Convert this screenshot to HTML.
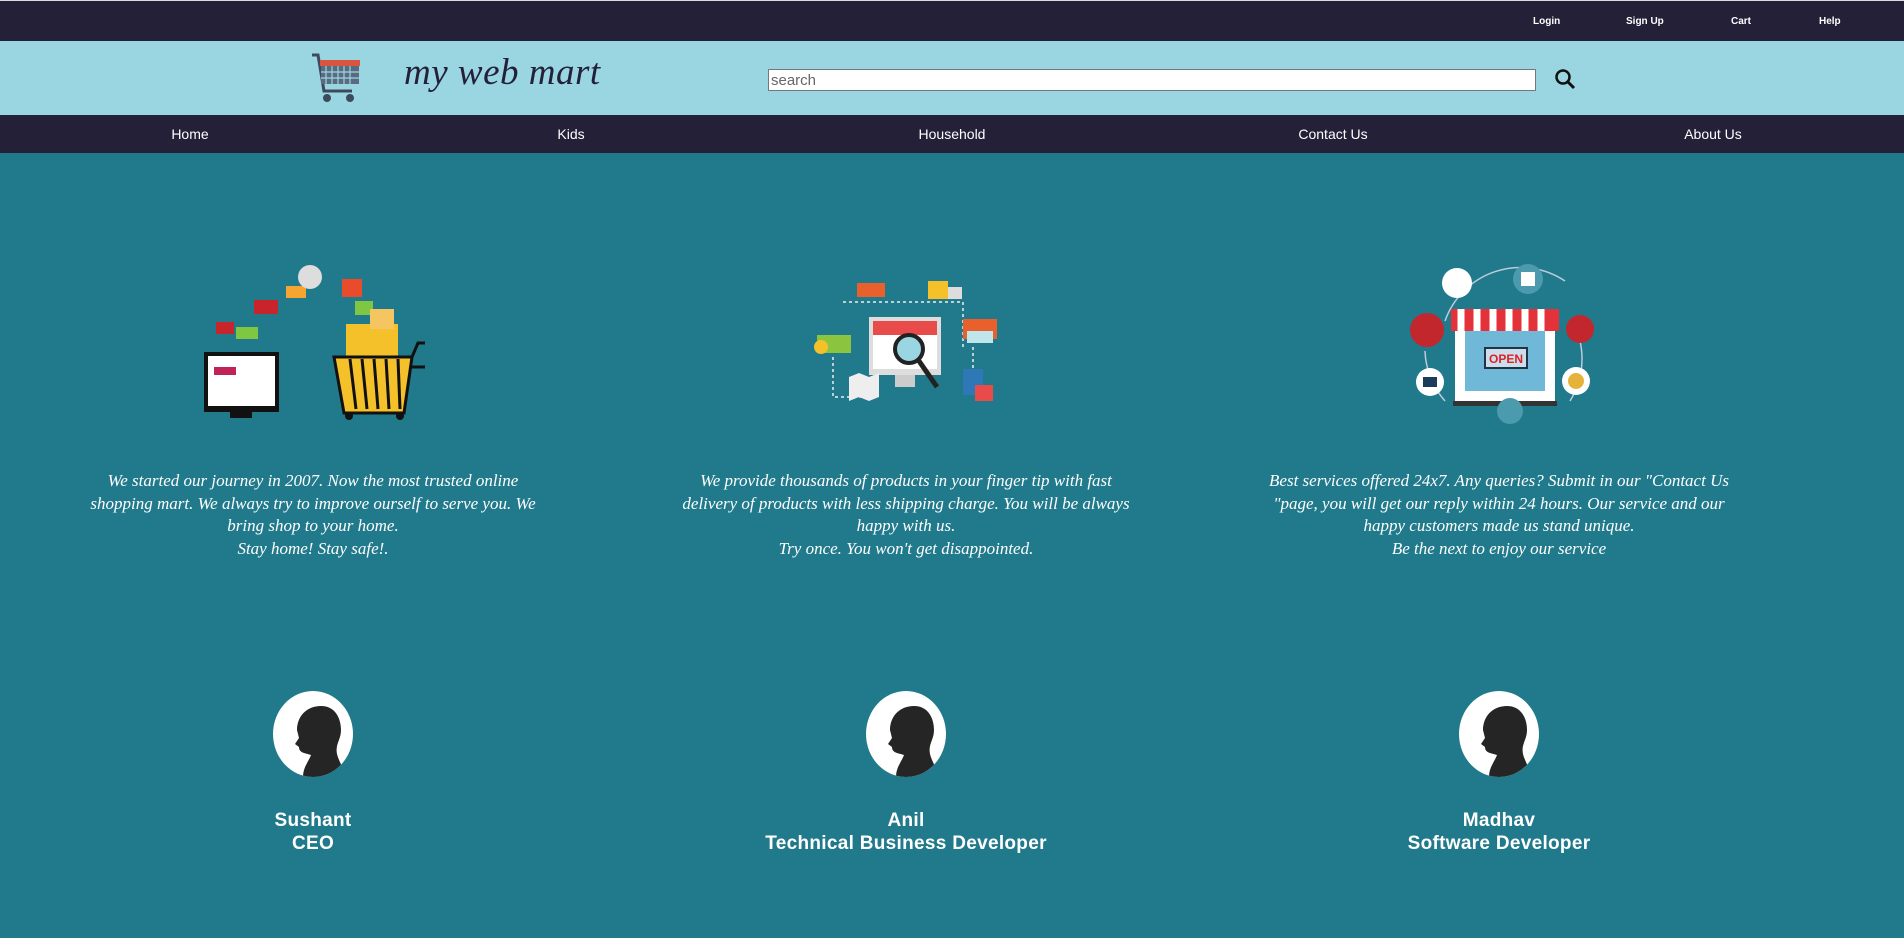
<!DOCTYPE html>
<html><head><meta charset="utf-8"><style>
*{margin:0;padding:0;box-sizing:border-box}
body{width:1904px;height:938px;background:#217a8b;font-family:"Liberation Sans",sans-serif;overflow:hidden;position:relative}
.top{position:absolute;left:0;top:0;width:1904px;height:41px;background:#232038;border-top:1px solid #ddd}
.top span{position:absolute;top:15px;color:#fff;font-size:10px;font-weight:bold}
.hdr{position:absolute;left:0;top:41px;width:1904px;height:74px;background:#9ad5e2}
.logo{position:absolute;left:404px;top:10px;font-family:"Liberation Serif",serif;font-style:italic;font-size:37px;color:#232038;letter-spacing:0.5px}
.search{position:absolute;left:768px;top:28px;width:768px;height:22px;background:#fff;border:1px solid #777;font-size:15px;color:#666;padding:2px 2px}
.nav{position:absolute;left:0;top:115px;width:1904px;height:38px;background:#232038}
.nav span{position:absolute;top:11px;color:#fff;font-size:14px;transform:translateX(-50%)}
.txt{position:absolute;top:470px;width:470px;transform:translateX(-50%);text-align:center;color:#fff;font-family:"Liberation Serif",serif;font-style:italic;font-size:17px;line-height:22.5px}
.av{position:absolute;top:691px;width:80px;height:86px;border-radius:50%;background:#fff;overflow:hidden;transform:translateX(-50%)}
.nm{position:absolute;top:809px;transform:translateX(-50%);text-align:center;color:#fff;font-weight:bold;font-size:19px;line-height:23px;white-space:nowrap;letter-spacing:0.3px}
</style></head><body>
<div class="top"><span style="left:1533px">Login</span><span style="left:1626px">Sign Up</span><span style="left:1731px">Cart</span><span style="left:1819px">Help</span></div>
<div class="hdr">
<svg style="position:absolute;left:308px;top:11px" width="56" height="54" viewBox="0 0 56 54"><path d="M4 3h6l6 36h28" stroke="#3d4a5c" stroke-width="3" fill="none"/><rect x="12" y="8" width="40" height="6" fill="#d8563f"/><rect x="13" y="14" width="38" height="18" fill="#5a6b80"/><path d="M18 14v18M24 14v18M30 14v18M36 14v18M42 14v18M13 20h38M13 26h38" stroke="#9ad5e2" stroke-width="1.2"/><circle cx="19" cy="46" r="4" fill="#3d4a5c"/><circle cx="42" cy="46" r="4" fill="#3d4a5c"/></svg>
<div class="logo">my web mart</div>
<div class="search">search</div>
<svg style="position:absolute;left:1554px;top:27px" width="22" height="22" viewBox="0 0 22 22"><circle cx="9" cy="9" r="6.5" stroke="#111" stroke-width="2.5" fill="none"/><path d="M13.5 13.5l6.5 6.5" stroke="#111" stroke-width="3"/></svg>
</div>
<div class="nav"><span style="left:190px">Home</span><span style="left:571px">Kids</span><span style="left:952px">Household</span><span style="left:1333px">Contact Us</span><span style="left:1713px">About Us</span></div>

<svg style="position:absolute;left:200px;top:259px" width="225" height="165" viewBox="0 0 225 165">
<rect x="4" y="93" width="75" height="60" fill="#111"/><rect x="8" y="97" width="67" height="50" fill="#fff"/><rect x="14" y="108" width="22" height="8" fill="#c0235a"/><rect x="30" y="153" width="22" height="6" fill="#111"/>
<path d="M137 108h112" stroke="#111" stroke-width="3"/>
<rect x="146" y="65" width="52" height="55" fill="#f4c12a"/>
<path d="M134 98l10 56h60l8-56z" fill="#f4c12a" stroke="#111" stroke-width="3"/><path d="M150 100l6 50M162 100l5 50M174 100l4 50M186 100l3 50M198 100l2 50" stroke="#111" stroke-width="3"/>
<path d="M212 98l6-14h8" stroke="#111" stroke-width="3" fill="none"/>
<circle cx="149" cy="157" r="4" fill="#111"/><circle cx="200" cy="157" r="4" fill="#111"/>
<rect x="54" y="41" width="24" height="14" fill="#c8242c"/><rect x="86" y="27" width="20" height="12" fill="#f6a531"/><circle cx="110" cy="18" r="12" fill="#ddd"/><rect x="142" y="20" width="20" height="18" fill="#e94b2c"/><rect x="155" y="42" width="18" height="14" fill="#7fc642"/><rect x="170" y="50" width="24" height="20" fill="#f4c560"/><rect x="36" y="68" width="22" height="12" fill="#7fc642"/><rect x="16" y="63" width="18" height="12" fill="#c8242c"/>
</svg>
<svg style="position:absolute;left:813px;top:277px" width="185" height="130" viewBox="0 0 185 130">
<path d="M30 25h120v45M20 80v40h30M160 70v30" stroke="#eee" stroke-width="1.5" stroke-dasharray="3 3" fill="none"/>
<rect x="44" y="6" width="28" height="14" fill="#e9602c"/><rect x="115" y="4" width="20" height="18" fill="#f4c12a"/><rect x="135" y="10" width="14" height="12" fill="#ddd"/>
<rect x="56" y="40" width="72" height="58" fill="#ddd"/><rect x="60" y="44" width="64" height="48" fill="#fff"/><rect x="60" y="44" width="64" height="14" fill="#e94b4b"/><rect x="82" y="98" width="20" height="12" fill="#ccc"/>
<circle cx="96" cy="72" r="14" fill="#9ad5e2" stroke="#222" stroke-width="4"/><path d="M106 84l18 26" stroke="#222" stroke-width="5"/>
<rect x="150" y="42" width="34" height="20" fill="#e9602c"/><rect x="154" y="54" width="26" height="12" fill="#bfe6ea"/>
<rect x="4" y="58" width="34" height="18" fill="#8bc53f"/><circle cx="8" cy="70" r="7" fill="#f4c12a"/>
<path d="M36 100l10-4 10 4 10-4v24l-10 4-10-4-10 4z" fill="#eee"/><rect x="150" y="92" width="20" height="26" fill="#2e78b8"/><rect x="162" y="108" width="18" height="16" fill="#e94b4b"/>
</svg>
<svg style="position:absolute;left:1405px;top:261px" width="190" height="168" viewBox="0 0 190 168">
<path d="M40 60a80 80 0 0 1 120-40M20 90a80 80 0 0 0 20 50M175 80a80 80 0 0 1-10 60" stroke="#bcd" stroke-width="1.5" fill="none"/>
<rect x="50" y="50" width="100" height="90" fill="#fff"/><rect x="60" y="68" width="80" height="62" fill="#6fb8d8"/><rect x="46" y="48" width="108" height="22" fill="#e4323b"/><path d="M56 48v22M72 48v22M88 48v22M104 48v22M120 48v22M136 48v22" stroke="#fff" stroke-width="7"/>
<rect x="80" y="87" width="42" height="20" fill="#cde" stroke="#234" stroke-width="2"/><text x="101" y="102" font-size="12" fill="#d22" text-anchor="middle" font-family="Liberation Sans" font-weight="bold">OPEN</text>
<rect x="48" y="140" width="104" height="5" fill="#333"/>
<circle cx="52" cy="22" r="15" fill="#fff"/><circle cx="123" cy="18" r="15" fill="#4b9aae"/><rect x="116" y="11" width="14" height="14" fill="#fff"/><circle cx="22" cy="69" r="17" fill="#c1272d"/><circle cx="175" cy="68" r="14" fill="#c1272d"/><circle cx="25" cy="121" r="14" fill="#fff"/><rect x="18" y="116" width="14" height="10" fill="#1d3c5a"/><circle cx="171" cy="120" r="14" fill="#fff"/><circle cx="171" cy="120" r="8" fill="#e6b33a"/><circle cx="105" cy="150" r="13" fill="#4b9aae"/>
</svg>

<div class="txt" style="left:313px">We started our journey in 2007. Now the most trusted online shopping mart. We always try to improve ourself to serve you. We bring shop to your home.<br>Stay home! Stay safe!.</div>
<div class="txt" style="left:906px">We provide thousands of products in your finger tip with fast delivery of products with less shipping charge. You will be always happy with us.<br>Try once. You won't get disappointed.</div>
<div class="txt" style="left:1499px">Best services offered 24x7. Any queries? Submit in our "Contact Us "page, you will get our reply within 24 hours. Our service and our happy customers made us stand unique.<br>Be the next to enjoy our service</div>

<div class="av" style="left:313px"><svg width="80" height="86" viewBox="0 0 80 86"><path d="M30 86c0-10 6-16 8-22-6-2-12-2-12-8l-4-3 4-6-2-8c0-14 10-24 24-24s20 12 20 24c0 10-6 14-4 24 2 8 6 12 8 23z" fill="#252525"/></svg></div>
<div class="av" style="left:906px"><svg width="80" height="86" viewBox="0 0 80 86"><path d="M30 86c0-10 6-16 8-22-6-2-12-2-12-8l-4-3 4-6-2-8c0-14 10-24 24-24s20 12 20 24c0 10-6 14-4 24 2 8 6 12 8 23z" fill="#252525"/></svg></div>
<div class="av" style="left:1499px"><svg width="80" height="86" viewBox="0 0 80 86"><path d="M30 86c0-10 6-16 8-22-6-2-12-2-12-8l-4-3 4-6-2-8c0-14 10-24 24-24s20 12 20 24c0 10-6 14-4 24 2 8 6 12 8 23z" fill="#252525"/></svg></div>

<div class="nm" style="left:313px">Sushant<br>CEO</div>
<div class="nm" style="left:906px">Anil<br>Technical Business Developer</div>
<div class="nm" style="left:1499px">Madhav<br>Software Developer</div>
</body></html>
